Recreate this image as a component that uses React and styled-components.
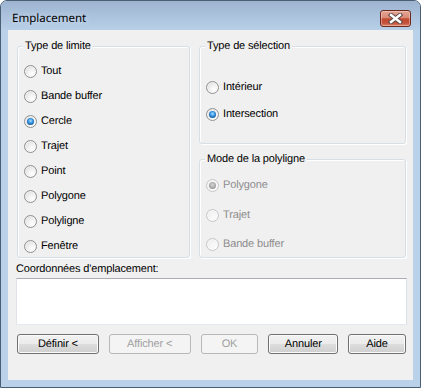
import React from 'react';
import styled, { createGlobalStyle } from 'styled-components';

const Global = createGlobalStyle`
  html, body { margin: 0; padding: 0; background: #ffffff; }
  #root { width: 421px; height: 388px; }
  * { box-sizing: border-box; }
`;

const Window = styled.div`
  width: 421px;
  height: 388px;
  border: 1px solid #4b5f74;
  border-radius: 7px 7px 0 0;
  background: #bad1ea;
  display: flex;
  flex-direction: column;
  overflow: hidden;
  font-family: "Liberation Sans", Arial, sans-serif;
  font-size: 11px;
  letter-spacing: -0.15px;
  text-rendering: geometricPrecision;
  color: #000;
`;

const TitleBar = styled.div`
  height: 29px;
  flex: none;
  display: flex;
  align-items: flex-start;
  justify-content: space-between;
  padding: 8px 9px 0 11px;
  background: linear-gradient(#9cb4d0 0%, #abc2dd 50%, #b8cfe8 100%);
`;

const Title = styled.div`
  font-family: "Noto Sans", "Open Sans", sans-serif;
  font-size: 11.5px;
  letter-spacing: 0;
  line-height: 20px;
  color: #000;
  text-shadow: 0 0 6px rgba(255, 255, 255, 0.6);
`;

const CloseButton = styled.div`
  margin-top: 1px;
  width: 31px;
  height: 17px;
  border: 1px solid #6b2a20;
  border-radius: 3px;
  background: linear-gradient(#e4a595 0%, #d98a77 45%, #c04a31 52%, #c4523a 80%, #d7836a 100%);
  box-shadow: inset 0 0 0 1px rgba(255, 220, 210, 0.45);
  display: flex;
  align-items: center;
  justify-content: center;
`;

const Client = styled.div`
  flex: 1;
  margin: 0 7px 7px 7px;
  background: #f0f0f0;
  padding: 16px 7px 0 9px;
  display: flex;
  flex-direction: column;
`;

const GroupsRow = styled.div`
  display: flex;
  gap: 9px;
  align-items: flex-start;
`;

const Column = styled.div`
  width: 207px;
  display: flex;
  flex-direction: column;
  gap: 15px;
`;

const Group = styled.div`
  width: ${p => p.$width}px;
  height: ${p => p.$height}px;
  border: 1px solid #d5dfe5;
  border-radius: 3px;
  box-shadow: inset 1px 1px 0 #ffffff, 1px 1px 0 #ffffff;
  padding: 0 6px;
  display: flex;
  flex-direction: column;
`;

const Legend = styled.div`
  align-self: flex-start;
  margin: -7px 0 0 -1px;
  padding: 0 2px;
  background: #f0f0f0;
  line-height: 13px;
  height: 13px;
  white-space: nowrap;
`;

const RadioList = styled.div`
  display: flex;
  flex-direction: column;
  padding-top: ${p => p.$pad}px;
  gap: ${p => p.$gap}px;
`;

const RadioRow = styled.div`
  display: flex;
  align-items: center;
  gap: 4px;
  height: 13px;
  line-height: 13px;
  color: ${p => (p.$disabled ? '#8d8d8d' : '#000')};
  white-space: nowrap;
`;

const RadioCircle = styled.span`
  width: 13px;
  height: 13px;
  flex: none;
  border-radius: 50%;
  border: 1px solid ${p => (p.$disabled ? '#c6c6c6' : '#8f9090')};
  background: ${p =>
    p.$disabled
      ? 'radial-gradient(circle at 65% 70%, #fbfbfb 0%, #f2f2f2 60%, #e6e6e6 100%)'
      : 'radial-gradient(circle at 65% 70%, #ffffff 0%, #f1f1f1 40%, #d4d4d4 100%)'};
  box-shadow: inset 0 0 0 1px rgba(255, 255, 255, 0.5);
  display: flex;
  align-items: center;
  justify-content: center;
  &::after {
    content: '';
    display: ${p => (p.$checked ? 'block' : 'none')};
    width: 7px;
    height: 7px;
    border-radius: 50%;
    background: ${p =>
      p.$disabled
        ? 'radial-gradient(circle at 50% 40%, #d6d6d6 0%, #a8a8a8 55%, #8a8a8a 100%)'
        : 'radial-gradient(circle at 50% 40%, #a6e0ff 0%, #3c97e4 40%, #13508f 78%, #0c3362 100%)'};
  }
`;

const FieldLabel = styled.div`
  margin: 5px 0 0 -1px;
  line-height: 13px;
  height: 13px;
`;

const TextBox = styled.div`
  margin: 2px 0 0 -1px;
  width: 391px;
  height: 47px;
  background: #ffffff;
  border: 1px solid #abadb3;
  border-left-color: #e2e3ea;
  border-right-color: #dbdfe6;
  border-bottom-color: #e3e9ef;
`;

const ButtonRow = styled.div`
  margin-top: 9px;
  display: flex;
  gap: 10px;
`;

const Button = styled.div`
  width: ${p => p.$width}px;
  height: 20px;
  border: 1px solid ${p => (p.$disabled ? '#b5b8ba' : '#707070')};
  border-radius: 3px;
  background: ${p =>
    p.$disabled
      ? '#f4f4f4'
      : 'linear-gradient(#f2f2f2 0%, #ebebeb 50%, #dddddd 51%, #cfcfcf 100%)'};
  box-shadow: inset 0 0 0 1px ${p => (p.$disabled ? '#f4f4f4' : '#fbfbfb')};
  color: ${p => (p.$disabled ? '#a0a0a0' : '#000')};
  display: flex;
  align-items: center;
  justify-content: center;
  line-height: 13px;
`;

function Radio({ label, checked, disabled }) {
  return (
    <RadioRow $disabled={disabled}>
      <RadioCircle $checked={checked} $disabled={disabled} />
      <span>{label}</span>
    </RadioRow>
  );
}

function CloseGlyph() {
  return (
    <svg width="15" height="11" viewBox="0 0 15 11">
      <g strokeLinecap="square">
        <path d="M3 2 L12 9 M12 2 L3 9" stroke="#5b4a47" strokeWidth="4.4" fill="none" />
        <path d="M3 2 L12 9 M12 2 L3 9" stroke="#ffffff" strokeWidth="2.4" fill="none" />
      </g>
    </svg>
  );
}

const limites = ['Tout', 'Bande buffer', 'Cercle', 'Trajet', 'Point', 'Polygone', 'Polyligne', 'Fenêtre'];

export default function App() {
  return (
    <>
      <Global />
      <Window>
        <TitleBar>
          <Title>Emplacement</Title>
          <CloseButton>
            <CloseGlyph />
          </CloseButton>
        </TitleBar>
        <Client>
          <GroupsRow>
            <Group $width={173} $height={212}>
              <Legend>Type de limite</Legend>
              <RadioList $pad={12} $gap={12}>
                {limites.map(l => (
                  <Radio key={l} label={l} checked={l === 'Cercle'} />
                ))}
              </RadioList>
            </Group>
            <Column>
              <Group $width={207} $height={98}>
                <Legend>Type de sélection</Legend>
                <RadioList $pad={28} $gap={14}>
                  <Radio label="Intérieur" />
                  <Radio label="Intersection" checked />
                </RadioList>
              </Group>
              <Group $width={207} $height={99}>
                <Legend>Mode de la polyligne</Legend>
                <RadioList $pad={13} $gap={16.5}>
                  <Radio label="Polygone" checked disabled />
                  <Radio label="Trajet" disabled />
                  <Radio label="Bande buffer" disabled />
                </RadioList>
              </Group>
            </Column>
          </GroupsRow>
          <FieldLabel>Coordonnées d'emplacement:</FieldLabel>
          <TextBox />
          <ButtonRow>
            <Button $width={82}>Définir &lt;</Button>
            <Button $width={82} $disabled>Afficher &lt;</Button>
            <Button $width={58} $disabled>OK</Button>
            <Button $width={70}>Annuler</Button>
            <Button $width={58}>Aide</Button>
          </ButtonRow>
        </Client>
      </Window>
    </>
  );
}
